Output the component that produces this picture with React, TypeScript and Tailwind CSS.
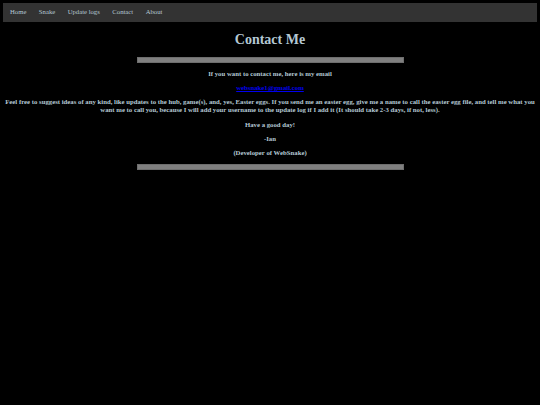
export default function App() {
  const links = ["Home", "Snake", "Update logs", "Contact", "About"];
  return (
    <div className="min-h-[405px] bg-black pt-[3px] font-['Liberation_Serif',serif] text-[#b4c8d4]">
      <nav className="mx-[3px] flex h-[19px] items-center gap-[12.5px] bg-[#333333] pl-[7px] text-[6.7px]">
        {links.map((l) => (
          <a key={l} className="text-[#b4c8d4]" href="#">
            {l}
          </a>
        ))}
      </nav>

      <h1 className="mt-[9px] text-center text-[14px] font-bold leading-[18px]">Contact Me</h1>

      <div className="mx-auto mt-[8px] h-[6px] w-[267px] border border-[#6e6e6e] bg-[#808080]" />

      <div className="text-center text-[6.75px] font-bold leading-[8px]">
        <p className="mt-[7px]">If you want to contact me, here is my email</p>
        <p className="mt-[6px]">
          <a className="text-[#0000ee] underline" href="#">
            websnake1@gmail.com
          </a>
        </p>
        <p className="mt-[6px]">
          Feel free to suggest ideas of any kind, like updates to the hub, game(s), and, yes, Easter eggs. If you send me an easter egg, give me a name to call the easter egg file, and tell me what you want me to call you, because I will add your username to the update log if I add it (It should take 2-3 days, if not, less).
        </p>
        <p className="mt-[7px]">Have a good day!</p>
        <p className="mt-[6px]">-Ian</p>
        <p className="mt-[6px]">(Developer of WebSnake)</p>
      </div>

      <div className="mx-auto mt-[7px] h-[6px] w-[267px] border border-[#6e6e6e] bg-[#808080]" />
    </div>
  );
}
